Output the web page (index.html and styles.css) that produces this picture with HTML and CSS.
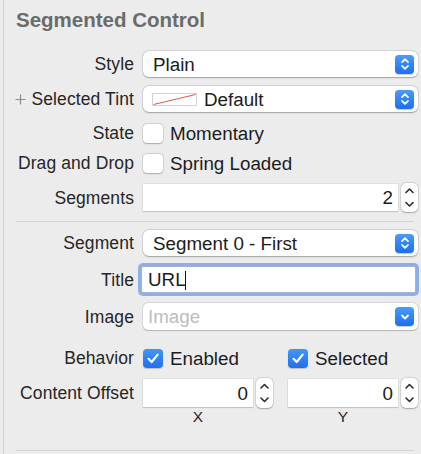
FILE: index.html
```html
<!DOCTYPE html>
<html>
<head>
<meta charset="utf-8">
<link rel="stylesheet" href="styles.css">
</head>
<body>
<div class="panel">
  <h1 class="heading">Segmented Control</h1>

  <div class="row r-style">
    <div class="lbl">Style</div>
    <div class="ctl popup">
      <span class="val">Plain</span>
      <span class="pbtn"><svg width="10" height="14" viewBox="0 0 10 14"><path d="M2 5.2 L5 2.2 L8 5.2 M2 8.8 L5 11.8 L8 8.8" fill="none" stroke="#fff" stroke-width="1.7" stroke-linecap="round" stroke-linejoin="round"/></svg></span>
    </div>
  </div>

  <div class="row r-tint">
    <div class="lbl"><span class="plus"><svg width="11" height="11" viewBox="0 0 11 11"><path d="M5.5 0.5 V10.5 M0.5 5.5 H10.5" stroke="#8d8d8d" stroke-width="1.2"/></svg></span>Selected Tint</div>
    <div class="ctl popup">
      <span class="swatch"><svg width="45" height="13" viewBox="0 0 45 13"><rect x="0.5" y="0.5" width="44" height="12" fill="#fff" stroke="#d4d4d4"/><path d="M1.5 11.5 L43.5 1.5" stroke="#e2554d" stroke-width="1"/></svg></span>
      <span class="val">Default</span>
      <span class="pbtn"><svg width="10" height="14" viewBox="0 0 10 14"><path d="M2 5.2 L5 2.2 L8 5.2 M2 8.8 L5 11.8 L8 8.8" fill="none" stroke="#fff" stroke-width="1.7" stroke-linecap="round" stroke-linejoin="round"/></svg></span>
    </div>
  </div>

  <div class="row r-state">
    <div class="lbl">State</div>
    <div class="ctl"><span class="cb"></span><span class="cbtext">Momentary</span></div>
  </div>

  <div class="row r-drag">
    <div class="lbl">Drag and Drop</div>
    <div class="ctl"><span class="cb"></span><span class="cbtext">Spring Loaded</span></div>
  </div>

  <div class="row r-segs">
    <div class="lbl">Segments</div>
    <div class="ctl">
      <span class="field">2</span>
      <span class="stepper"><svg width="17" height="29" viewBox="0 0 17 29"><path d="M5 9.5 L8.5 6 L12 9.5 M5 19.5 L8.5 23 L12 19.5" fill="none" stroke="#2b2b2b" stroke-width="1.6" stroke-linecap="round" stroke-linejoin="round"/></svg></span>
    </div>
  </div>

  <div class="sep"></div>

  <div class="row r-seg">
    <div class="lbl">Segment</div>
    <div class="ctl popup">
      <span class="val">Segment 0 - First</span>
      <span class="pbtn"><svg width="10" height="14" viewBox="0 0 10 14"><path d="M2 5.2 L5 2.2 L8 5.2 M2 8.8 L5 11.8 L8 8.8" fill="none" stroke="#fff" stroke-width="1.7" stroke-linecap="round" stroke-linejoin="round"/></svg></span>
    </div>
  </div>

  <div class="row r-title">
    <div class="lbl">Title</div>
    <div class="ctl tfield"><span>URL</span><span class="caret"></span></div>
  </div>

  <div class="row r-image">
    <div class="lbl">Image</div>
    <div class="ctl combo">
      <span class="val ph">Image</span>
      <span class="pbtn"><svg width="10" height="14" viewBox="0 0 10 14"><path d="M2 5.5 L5 8.5 L8 5.5" fill="none" stroke="#fff" stroke-width="1.8" stroke-linecap="round" stroke-linejoin="round"/></svg></span>
    </div>
  </div>

  <div class="row r-beh">
    <div class="lbl">Behavior</div>
    <div class="ctl halves">
      <div class="half"><span class="cb on"><svg width="20" height="19" viewBox="0 0 20 19"><path d="M5.5 9.8 L8.7 13 L14.6 5.6" fill="none" stroke="#fff" stroke-width="2.2" stroke-linecap="round" stroke-linejoin="round"/></svg></span><span class="cbtext">Enabled</span></div>
      <div class="half"><span class="cb on"><svg width="20" height="19" viewBox="0 0 20 19"><path d="M5.5 9.8 L8.7 13 L14.6 5.6" fill="none" stroke="#fff" stroke-width="2.2" stroke-linecap="round" stroke-linejoin="round"/></svg></span><span class="cbtext">Selected</span></div>
    </div>
  </div>

  <div class="row r-off">
    <div class="lbl">Content Offset</div>
    <div class="ctl halves">
      <div class="half">
        <span class="field tall">0</span>
        <span class="stepper big"><svg width="17" height="30" viewBox="0 0 17 30"><path d="M5 10 L8.5 6.5 L12 10 M5 20 L8.5 23.5 L12 20" fill="none" stroke="#2b2b2b" stroke-width="1.6" stroke-linecap="round" stroke-linejoin="round"/></svg></span>
      </div>
      <div class="half">
        <span class="field tall">0</span>
        <span class="stepper big"><svg width="17" height="30" viewBox="0 0 17 30"><path d="M5 10 L8.5 6.5 L12 10 M5 20 L8.5 23.5 L12 20" fill="none" stroke="#2b2b2b" stroke-width="1.6" stroke-linecap="round" stroke-linejoin="round"/></svg></span>
      </div>
    </div>
  </div>

  <div class="row r-xy">
    <div class="lbl"></div>
    <div class="ctl halves">
      <div class="half axis">X</div>
      <div class="half axis">Y</div>
    </div>
  </div>

  <div class="sep sep2"></div>
</div>
</body>
</html>
```

FILE: styles.css
```css
* { box-sizing: border-box; }
html, body { margin: 0; padding: 0; background: #ececec; }
body {
  width: 421px;
  height: 454px;
  overflow: hidden;
  font-family: "Liberation Sans", Arial, sans-serif;
  color: #262626;
}
.panel {
  margin-left: 3px;
  border-left: 1px solid #d2d2d2;
  height: 454px;
  padding-top: 8px;
  padding-right: 3px;
}
.heading {
  margin: 0 0 0 12px;
  font-size: 20.5px;
  line-height: 24px;
  font-weight: bold;
  color: #6b6b6b;
}
.row { display: flex; align-items: center; }
.lbl {
  width: 130px;
  flex: none;
  margin-right: 9px;
  font-size: 17.5px;
  letter-spacing: 0.1px;
  white-space: nowrap;
  display: flex;
  justify-content: flex-end;
  align-items: center;
  color: #262626;
  padding-top: 1px;
}
.ctl {
  flex: 1;
  min-width: 0;
  display: flex;
  align-items: center;
  font-size: 18.8px;
  color: #1c1c1c;
}
.plus { display: flex; margin-right: 6px; }

.r-style { margin-top: 19px; height: 26px; }
.r-tint { margin-top: 9px; height: 26px; }
.r-state { margin-top: 10px; height: 22px; }
.r-drag { margin-top: 8px; height: 22px; }
.r-segs { margin-top: 9px; height: 29px; }
.r-seg { margin-top: 8px; height: 26px; }
.r-title { margin-top: 10px; height: 27px; }
.r-image { margin-top: 10px; height: 27px; }
.r-beh { margin-top: 17px; height: 22px; }
.r-off { margin-top: 9px; height: 30px; }
.r-xy { height: 18px; }

.sep {
  margin: 9px 4px 0 12px;
  height: 1px;
  background: #d5d5d5;
}
.sep2 { margin-top: 24px; }

.popup {
  height: 26px;
  background: #fff;
  border-radius: 6px;
  box-shadow: 0 0 0 0.5px rgba(0,0,0,0.12), 0 0.5px 1.5px rgba(0,0,0,0.28);
  padding-left: 10px;
  padding-right: 4px;
}
.val { flex: 1; white-space: nowrap; padding-top: 1px; }
.pbtn {
  width: 19px;
  height: 19px;
  flex: none;
  border-radius: 4px;
  background: linear-gradient(#4b9bf9, #1c6ff0);
  box-shadow: 0 0.5px 1px rgba(0,0,0,0.2);
  display: flex;
  align-items: center;
  justify-content: center;
}
.swatch { display: flex; margin-left: -1px; margin-right: 7px; }

.cb {
  width: 20px;
  height: 19px;
  flex: none;
  border-radius: 4px;
  background: #fff;
  box-shadow: 0 0 0 0.5px rgba(0,0,0,0.16), 0 0.5px 1.5px rgba(0,0,0,0.22);
  display: flex;
}
.cb.on {
  background: linear-gradient(#4196f8, #1f70ef);
  box-shadow: 0 0.5px 1px rgba(0,0,0,0.2);
}
.cbtext { margin-left: 7px; white-space: nowrap; padding-top: 1px; }

.field {
  flex: 1;
  height: 27px;
  background: #fff;
  box-shadow: 0 0 0 0.5px rgba(0,0,0,0.1), 0 1px 1px rgba(0,0,0,0.12);
  display: flex;
  align-items: center;
  justify-content: flex-end;
  padding-right: 5px;
  padding-top: 1px;
}
.field.tall { height: 28px; }
.stepper {
  width: 17px;
  height: 29px;
  flex: none;
  margin-left: 3px;
  border-radius: 5px;
  background: #fff;
  box-shadow: 0 0 0 0.5px rgba(0,0,0,0.12), 0 0.5px 1.5px rgba(0,0,0,0.25);
  display: flex;
}
.stepper.big { height: 30px; }

.tfield {
  margin-left: -2px;
  margin-right: 2px;
  height: 27px;
  background: #fff;
  border: 1px solid #9fb3d6;
  border-radius: 2px;
  box-shadow: 0 0 0 3px #8cafec;
  padding-left: 6px;
  padding-top: 1px;
}
.caret {
  width: 1.5px;
  height: 19px;
  background: #111;
  margin-left: -1px;
}

.combo {
  height: 27px;
  background: #fff;
  border-radius: 5px;
  box-shadow: 0 0 0 0.5px rgba(0,0,0,0.14), 0 0.5px 1px rgba(0,0,0,0.18);
  padding-left: 5px;
  padding-right: 4px;
}
.ph { color: #bdbdbd; }

.halves { gap: 15px; }
.half {
  flex: 1;
  min-width: 0;
  display: flex;
  align-items: center;
}
.axis {
  justify-content: center;
  padding-right: 20px;
  font-size: 15.5px;
  color: #262626;
}
```
